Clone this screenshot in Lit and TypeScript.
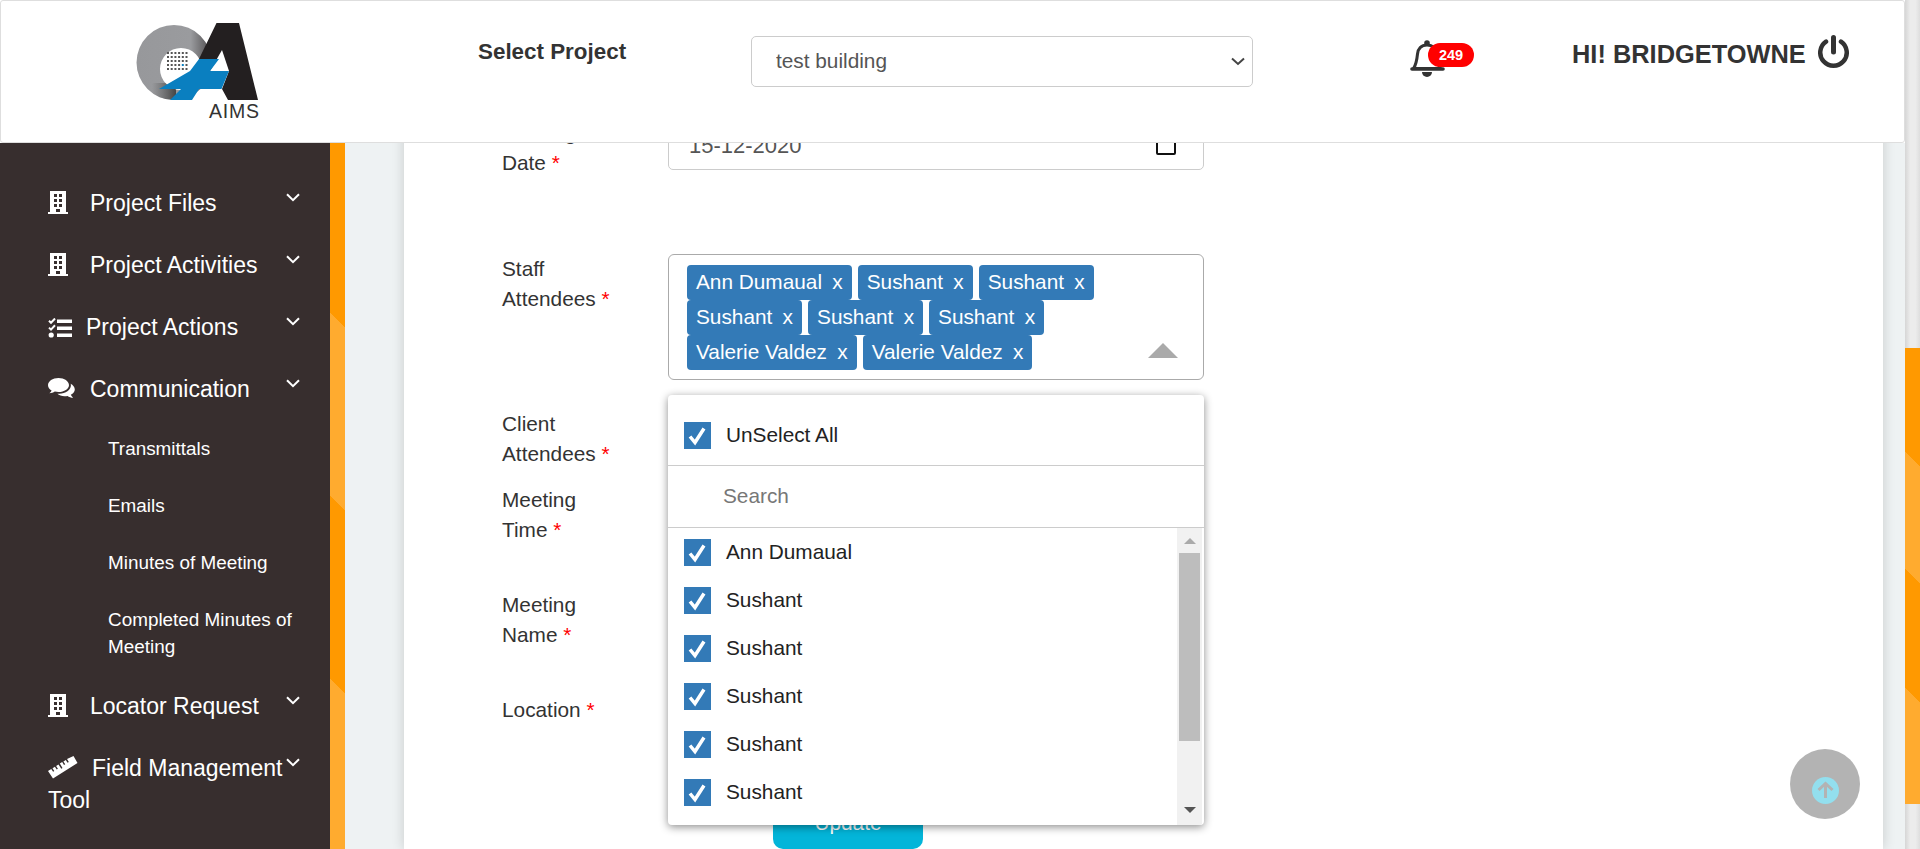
import { LitElement, html, css, svg } from "lit";
import { customElement } from "lit/decorators.js";

type Nav = { label: string; icon: string };

const NAV: Nav[] = [
  { label: "Project Files", icon: "building" },
  { label: "Project Activities", icon: "building" },
  { label: "Project Actions", icon: "tasks" },
  { label: "Communication", icon: "comments" },
  { label: "Locator Request", icon: "building" },
  { label: "Field Management Tool", icon: "ruler" },
];

const SUBS = ["Transmittals", "Emails", "Minutes of Meeting", "Completed Minutes of Meeting"];

const CHIPS = [
  "Ann Dumaual",
  "Sushant",
  "Sushant",
  "Sushant",
  "Sushant",
  "Sushant",
  "Valerie Valdez",
  "Valerie Valdez",
];

const OPTIONS = ["Ann Dumaual", "Sushant", "Sushant", "Sushant", "Sushant", "Sushant"];

const icons: Record<string, unknown> = {
  building: html`<svg class="ico" width="20" height="23" viewBox="0 0 20 23">
    <path
      fill="#fff"
      fill-rule="evenodd"
      d="M2 0h16v21h2v2H0v-2h2zM6 3v3h3V3zm5 0v3h3V3zM6 8v3h3V8zm5 0v3h3V8zM6 13v3h3v-3zm5 0v3h3v-3zM8 18v3h4v-3z"
    />
  </svg>`,
  tasks: html`<svg class="ico tasks" width="24" height="20" viewBox="0 0 24 20">
    <path fill="#fff" d="M9 1.500h15v3.400H9zM9 8.500h15v3.400H9zM9 15.600h15V19H9z" />
    <path fill="none" stroke="#fff" stroke-width="2" d="M1 2.800l2 2 4-4.300M1 9.600l2 2 4-4.300" />
    <circle cx="3.200" cy="17" r="2.600" fill="#fff" />
  </svg>`,
  comments: html`<svg class="ico comments" width="28" height="22" viewBox="0 0 28 22">
    <path
      fill="#fff"
      d="M10.500 0C4.700 0 0 3.200 0 7.200c0 2.200 1.400 4.100 3.600 5.400-.4 1-1.200 1.900-2.200 2.600 2 0 3.900-.6 5.400-1.600 1.200.3 2.400.4 3.700.4 5.800 0 10.500-3.100 10.500-6.800C21 3.200 16.300 0 10.500 0z"
    />
    <path
      fill="#fff"
      d="M22.600 5.800c.2.5.3 1 .3 1.500 0 4.600-5.300 8.500-11.600 8.500-.7 0-1.300 0-1.900-.1 1.700 1.500 4.300 2.500 7.200 2.500 1 0 2-.1 2.900-.3 1.500 1.100 3.500 1.800 5.600 1.800-1-.8-1.800-1.800-2.300-2.900 2.400-1.200 4-3.100 4-5.200 0-2.500-1.800-4.700-4.200-5.800z"
    />
  </svg>`,
  ruler: html`<svg class="ico ruler" width="30" height="23" viewBox="0 0 30 23">
    <path
      fill="#fff"
      d="M25.500 0 29.500 7 5 22.500 0 15l3.300-2 1.800 2.800 1.200-.7-1.800-2.900 2.400-1.500 1.800 2.900 1.200-.8-1.800-2.900 2.400-1.500 2.800 4.300 1.200-.8-2.700-4.300 2.400-1.500 1.800 2.900 1.200-.7-1.800-2.900 2.400-1.500 1.800 2.900 1.200-.8-1.800-2.900z"
    />
  </svg>`,
};

const chevron = html`<svg class="chev" width="14" height="9" viewBox="0 0 14 9">
  <path d="M1 1.200l6 6 6-6" fill="none" stroke="#fff" stroke-width="2" />
</svg>`;

const logoDots = () => {
  const out = [];
  for (let r = 0; r < 5; r++) {
    for (let c = 0; c < 6; c++) {
      const blue = r === 3 && c === 4;
      out.push(
        svg`<rect x=${37 + c * 3.7} y=${37 + r * 4} width="2" height="2" fill=${blue ? "#0a7fc0" : "#555"} />`
      );
    }
  }
  return out;
};

// viewBox starts at the logo's own corner, 130,15 on the page
const logo = html`<svg class="logo" width="135" height="108" viewBox="0 0 135 108">
  <defs>
    <linearGradient id="ring" x1="0" y1="0" x2="1" y2="0">
      <stop offset="0" stop-color="#97989b" />
      <stop offset="0.72" stop-color="#9a9b9e" />
      <stop offset="1" stop-color="#4a4749" />
    </linearGradient>
    <linearGradient id="fade" x1="0" y1="0" x2="1" y2="0">
      <stop offset="0" stop-color="#555" stop-opacity="0" />
      <stop offset="1" stop-color="#444" />
    </linearGradient>
    <clipPath id="ringclip">
      <path
        clip-rule="evenodd"
        d="M6.500 47.500a37.500 37.500 0 1 0 75 0a37.500 37.500 0 1 0-75 0zM30 54a21 21 0 1 0 42 0a21 21 0 1 0-42 0z"
      />
    </clipPath>
  </defs>
  <rect x="6" y="10" width="76" height="76" fill="url(#ring)" clip-path="url(#ringclip)" />
  <rect x="22" y="68" width="24" height="18" fill="url(#fade)" clip-path="url(#ringclip)" />
  <path fill="#231f20" d="M86.500 8H109l19 77H98L92 74 99 56H80L69 44z" />
  <path fill="#fff" d="M80 56h19L92 35z" />
  ${logoDots()}
  <path fill="#0a7fc0" d="M69 44h20L80 56h19l-7.500 18H69l-7 11H40l11-11H29L60 56z" />
  <text x="79" y="103" class="aims" textLength="50">AIMS</text>
</svg>`;

@customElement("app-root")
export class AppRoot extends LitElement {
  static styles = css`
    :host {
      display: block;
      width: 1920px;
      height: 849px;
      overflow: hidden;
      font-family: "Liberation Sans", Arial, sans-serif;
      font-size: 20.8px;
      color: #333;
    }
    .shell {
      display: flex;
      height: 849px;
    }
    .page {
      flex: 1;
      min-width: 0;
      display: flex;
      flex-direction: column;
    }

    /* page scrollbar, drawn since the sandbox scrollbar differs */
    .pagebar {
      width: 15px;
      padding-top: 348px;
      box-sizing: border-box;
      background: linear-gradient(90deg, #d6d6d6, #ececec 35%, #ececec 70%, #dedede);
    }
    .pagebar div {
      height: 456px;
      background: linear-gradient(
        45deg,
        #ffab2f 0 82.4px,
        #ff9900 0 166.2px,
        #ffab2f 0 249.6px,
        #ff9900 0
      );
    }

    header {
      height: 143px;
      box-sizing: border-box;
      flex: none;
      display: flex;
      align-items: flex-start;
      background: #fff;
      border: 1px solid #dedede;
      border-radius: 3px;
    }
    .logo {
      margin: 14px 0 0 129px;
      flex: none;
    }
    .aims {
      font: 19.5px "Liberation Sans", Arial, sans-serif;
      fill: #333;
    }
    .title {
      margin: 37px 0 0 213px;
      width: 273px;
      font-size: 22.4px;
      line-height: 28px;
      font-weight: 700;
    }
    .picker {
      position: relative;
      margin-top: 35px;
      width: 502px;
      height: 51px;
      flex: none;
    }
    .picker select {
      appearance: none;
      width: 100%;
      height: 100%;
      box-sizing: border-box;
      padding: 0 0 2px 24px;
      font: 20.8px "Liberation Sans", Arial, sans-serif;
      color: #555;
      background: #fff;
      border: 1px solid #ccc;
      border-radius: 5px;
    }
    .picker svg {
      position: absolute;
      right: 8px;
      top: 21px;
    }
    .bell {
      position: relative;
      margin: 39px 0 0 157px;
      width: 36px;
      height: 38px;
      flex: none;
    }
    .badge {
      position: absolute;
      left: 18px;
      top: 3px;
      width: 46px;
      height: 24px;
      border-radius: 12px;
      background: #f00;
      color: #fff;
      font-size: 14.500px;
      line-height: 24px;
      font-weight: 700;
      text-align: center;
    }
    .hi {
      margin: 38px 0 0 126px;
      font-size: 25.4px;
      line-height: 30px;
      font-weight: 700;
      white-space: nowrap;
    }
    .power {
      margin: 34px 0 0 12px;
      flex: none;
    }

    .body {
      flex: 1;
      min-height: 0;
      display: flex;
    }
    nav {
      width: 330px;
      flex: none;
      box-sizing: border-box;
      padding: 29px 30px 0 48px;
      background: #372e2e;
      color: #fff;
      overflow: hidden;
    }
    .rail {
      width: 15px;
      flex: none;
      background: linear-gradient(
        45deg,
        #ffab2f 0 120.5px,
        #ff9900 0 250px,
        #ffab2f 0 379.7px,
        #ff9900 0
      );
    }
    .item {
      display: flex;
      align-items: flex-start;
      padding: 15px 0;
      font-size: 23px;
      line-height: 32px;
    }
    .item .text {
      flex: 1;
      min-width: 0;
    }
    .ico {
      vertical-align: -3px;
      margin-right: 22px;
    }
    .ico.tasks {
      margin-right: 14px;
    }
    .ico.comments {
      margin-right: 14px;
    }
    .ico.ruler {
      margin-right: 14px;
    }
    .chev {
      flex: none;
      margin-top: 6px;
    }
    .sub {
      padding: 15px 0 15px 60px;
      font-size: 18.9px;
      line-height: 27px;
    }

    .content {
      flex: 1;
      min-width: 0;
      position: relative;
      overflow: hidden;
      padding: 0 22px 0 59px;
      background: #eef2f3;
    }
    .card {
      height: calc(100% + 25px);
      margin-top: -25px;
      padding: 0 0 0 98px;
      background: #fff;
      box-shadow: 0 0 12px rgba(0, 0, 0, 0.16);
    }
    .row {
      display: flex;
      align-items: flex-start;
      line-height: 30px;
    }
    .row label {
      width: 166px;
      flex: none;
    }
    .row label i {
      font-style: normal;
      color: #f00;
    }
    .control {
      position: relative;
      width: 536px;
      flex: none;
    }
    .r-date {
      height: 136px;
    }
    .r-staff {
      height: 155px;
    }
    .r-client {
      height: 76px;
    }
    .r-time,
    .r-name {
      height: 105px;
    }
    .r-loc {
      height: 102px;
    }
    .input {
      display: flex;
      align-items: center;
      justify-content: space-between;
      box-sizing: border-box;
      height: 51px;
      margin-top: 1px;
      padding: 2px 6px 0 20px;
      background: #fff;
      border: 1px solid #ccc;
      border-radius: 5px;
      color: #555;
      font-size: 22px;
    }
    .cal {
      width: 20px;
      height: 20px;
      box-sizing: border-box;
      margin: 0 21px 2px 0;
      border: 2.500px solid #111;
      border-radius: 2px;
    }
    .multi {
      position: relative;
      box-sizing: border-box;
      height: 126px;
      padding: 10px 18px;
      border: 1px solid #aaa;
      border-radius: 6px;
      display: flex;
      flex-wrap: wrap;
      align-content: flex-start;
      column-gap: 6px;
    }
    .chip {
      height: 35px;
      padding: 0 9px;
      border-radius: 4px;
      background: #337ab7;
      color: #fff;
      line-height: 33px;
      white-space: nowrap;
    }
    .chip b {
      font-weight: 400;
      margin-left: 4.500px;
    }
    .wrap-after {
      flex-basis: 100%;
      height: 0;
    }
    .caret {
      position: absolute;
      right: 25px;
      bottom: 21px;
      width: 0;
      height: 0;
      border-left: 15px solid transparent;
      border-right: 15px solid transparent;
      border-bottom: 15px solid #aaa;
    }
    .menu {
      position: absolute;
      left: 0;
      top: 141px;
      z-index: 5;
      width: 536px;
      height: 430px;
      overflow: hidden;
      background: #fff;
      border-radius: 4px;
      box-shadow: 0 2px 8px rgba(0, 0, 0, 0.45);
      color: #222;
    }
    .all {
      display: flex;
      align-items: center;
      gap: 15px;
      height: 71px;
      box-sizing: border-box;
      padding: 10px 0 0 16px;
      border-bottom: 1px solid #ccc;
    }
    .search {
      height: 62px;
      box-sizing: border-box;
      padding: 0 0 0 55px;
      line-height: 60px;
      color: #777;
      border-bottom: 1px solid #ccc;
    }
    .list {
      display: flex;
      height: 297px;
    }
    .opts {
      flex: 1;
      padding: 0 0 0 16px;
    }
    .opt {
      display: flex;
      align-items: center;
      gap: 15px;
      height: 48px;
    }
    .box {
      width: 27px;
      height: 27px;
      flex: none;
      display: block;
    }
    .sb {
      width: 25px;
      margin-right: 2px;
      flex: none;
      display: flex;
      flex-direction: column;
      align-items: center;
      background: #f1f1f1;
    }
    .sb .up {
      margin-top: 10px;
      border-left: 6px solid transparent;
      border-right: 6px solid transparent;
      border-bottom: 6px solid #aaa;
    }
    .sb .thumb {
      width: 21px;
      height: 188px;
      margin-top: 9px;
      background: #bdbdbd;
    }
    .sb .down {
      margin-top: 66px;
      border-left: 6px solid transparent;
      border-right: 6px solid transparent;
      border-top: 6px solid #555;
    }
    .update {
      display: block;
      width: 150px;
      height: 52px;
      margin-left: 271px;
      padding: 0;
      border: 0;
      border-radius: 10px;
      background: #03b5d9;
      color: #fff;
      font: 20.8px "Liberation Sans", Arial, sans-serif;
    }
    .fab {
      position: absolute;
      right: 45px;
      bottom: 30px;
      width: 70px;
      height: 70px;
      border-radius: 50%;
      background: #b3b3b3;
    }
    .fab svg {
      position: absolute;
      left: 22px;
      top: 28px;
    }
  `;

  private checkbox() {
    return html`<svg class="box" viewBox="0 0 27 27">
      <rect width="27" height="27" fill="#337ab7" />
      <path d="M6 14.500l5 6 9-14" fill="none" stroke="#fff" stroke-width="3.500" />
    </svg>`;
  }

  private navItem(item: Nav) {
    return html`<div class="item">
      <div class="text">${icons[item.icon]}${item.label}</div>
      ${chevron}
    </div>`;
  }

  private field(cls: string, lines: string[], control: unknown) {
    return html`<div class="row ${cls}">
      <label>${lines[0]}<br />${lines[1]} <i>*</i></label>
      <div class="control">${control}</div>
    </div>`;
  }

  private renderHeader() {
    return html`<header>
      ${logo}
      <div class="title">Select Project</div>
      <div class="picker">
        <select><option>test building</option></select>
        <svg width="14" height="9" viewBox="0 0 14 9">
          <path d="M1 1.500l6 5.500 6-5.500" fill="none" stroke="#444" stroke-width="2" />
        </svg>
      </div>
      <div class="bell">
        <svg width="36" height="38" viewBox="0 0 36 38">
          <circle cx="17" cy="3" r="2.800" fill="#333" />
          <path
            d="M17 5c-6 0-9 4-9.500 9-.6 6-1 10-4 14.500h27c-3-4.500-3.400-8.500-4-14.500-.5-5-3.500-9-9.500-9z"
            fill="none"
            stroke="#333"
            stroke-width="3"
          />
          <path d="M2 29h31" stroke="#333" stroke-width="3.600" stroke-linecap="round" />
          <path d="M12 32h10a5 5 0 0 1-10 0z" fill="#333" />
        </svg>
        <span class="badge">249</span>
      </div>
      <div class="hi">HI! BRIDGETOWNE</div>
      <svg class="power" width="31" height="34" viewBox="0 0 31 34">
        <path
          d="M8 6.600a13.250 13.250 0 1 0 15 0"
          fill="none"
          stroke="#333"
          stroke-width="4.500"
          stroke-linecap="round"
        />
        <path d="M15.500 2.500V17" stroke="#333" stroke-width="5" stroke-linecap="round" />
      </svg>
    </header>`;
  }

  private renderNav() {
    return html`<nav>
      ${NAV.slice(0, 4).map((n) => this.navItem(n))}
      ${SUBS.map((s) => html`<div class="sub">${s}</div>`)}
      ${NAV.slice(4).map((n) => this.navItem(n))}
    </nav>`;
  }

  private renderMenu() {
    return html`<div class="menu">
      <div class="all">${this.checkbox()}<span>UnSelect All</span></div>
      <div class="search">Search</div>
      <div class="list">
        <div class="opts">
          ${OPTIONS.map((o) => html`<div class="opt">${this.checkbox()}<span>${o}</span></div>`)}
        </div>
        <div class="sb">
          <div class="up"></div>
          <div class="thumb"></div>
          <div class="down"></div>
        </div>
      </div>
    </div>`;
  }

  private renderForm() {
    const staff = html`<div class="multi">
        ${CHIPS.map(
          (c, i) => html`<span class="chip">${c} <b>x</b></span>
            ${i === 2 || i === 5 ? html`<span class="wrap-after"></span>` : ""}`
        )}
        <span class="caret"></span>
      </div>
      ${this.renderMenu()}`;
    return html`<div class="card">
      ${this.field(
        "r-date",
        ["Meeting", "Date"],
        html`<div class="input">15-12-2020<span class="cal"></span></div>`
      )}
      ${this.field("r-staff", ["Staff", "Attendees"], staff)}
      ${this.field("r-client", ["Client", "Attendees"], html`<div class="input"></div>`)}
      ${this.field("r-time", ["Meeting", "Time"], html`<div class="input"></div>`)}
      ${this.field("r-name", ["Meeting", "Name"], html`<div class="input"></div>`)}
      <div class="row r-loc">
        <label>Location <i>*</i></label>
        <div class="control"><div class="input"></div></div>
      </div>
      <button class="update">Update</button>
    </div>`;
  }

  render() {
    return html`<div class="shell">
      <div class="page">
        ${this.renderHeader()}
        <div class="body">
          ${this.renderNav()}
          <div class="rail"></div>
          <div class="content">
            ${this.renderForm()}
            <div class="fab">
              <svg width="27" height="27" viewBox="0 0 27 27">
                <circle cx="13.500" cy="13.500" r="13.500" fill="#93dfee" />
                <path
                  d="M13.500 21V7M6.500 13l7-6.500 7 6.500"
                  fill="none"
                  stroke="#b3b3b3"
                  stroke-width="3"
                />
              </svg>
            </div>
          </div>
        </div>
      </div>
      <div class="pagebar"><div></div></div>
    </div>`;
  }
}
